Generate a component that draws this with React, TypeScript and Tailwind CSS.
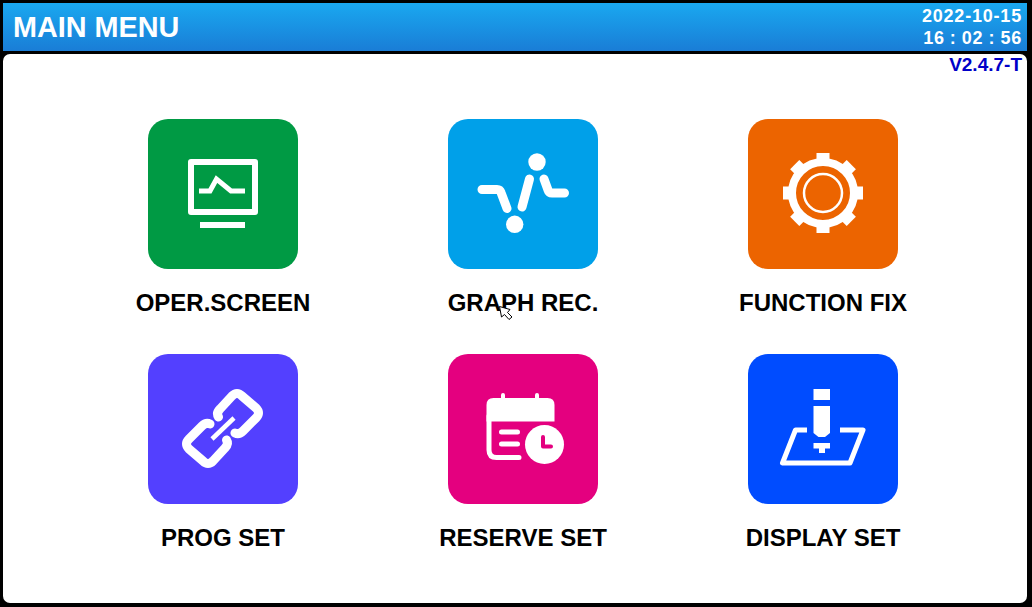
const Tile = ({ bg, label, children }: { bg: string; label: string; children: React.ReactNode }) => (
  <div className="flex flex-col items-center w-[300px]">
    <div className={`w-[150px] h-[150px] rounded-[20px] ${bg}`}>
      <svg width="150" height="150" viewBox="0 0 150 150" fill="none" className="block">{children}</svg>
    </div>
    <div className="mt-[20px] h-[27px] leading-[27px] text-[24px] font-bold text-black whitespace-nowrap">{label}</div>
  </div>
);

const gearTeeth = [0, 45, 90, 135, 180, 225, 270, 315];

const LINK = "M70.500 63Q68 59 72 55L84 42Q89 37 94 42L108 54Q113 59 108 64L95 77Q91 81 87 79";

export default function App() {
  return (
    <div className="relative w-[1032px] h-[607px] bg-black overflow-hidden pl-[3px] pr-[5px] pt-[3px] pb-[4px] flex flex-col font-['Liberation_Sans',Arial,sans-serif]">
      <header className="h-[48px] shrink-0 flex justify-between items-center pl-[10px] pr-[5px] bg-gradient-to-b from-[#1aa8f0] to-[#1a7dd6] text-white font-bold">
        <div className="text-[28.8px] leading-none">MAIN MENU</div>
        <div className="text-[18px] leading-[22px] text-right tracking-[0.8px]">
          <div>2022-10-15</div>
          <div className="[word-spacing:-0.7px]">16 : 02 : 56</div>
        </div>
      </header>
      <main className="mt-[3px] flex-1 bg-white rounded-[7px] flex flex-col">
        <div className="h-[22px] pr-[5px] text-right text-[#0000c8] font-bold text-[19px] leading-[22px]">V2.4.7-T</div>
        <div className="pt-[43px] pl-[70px] grid grid-cols-3 w-[970px] gap-y-[38px]">
          <Tile bg="bg-[#009a44]" label="OPER.SCREEN">
            <rect x="43" y="43" width="64" height="50" stroke="#fff" strokeWidth="6" strokeLinejoin="round" />
            <path d="M51 72h11l6.500-12L83 72h14" stroke="#fff" strokeWidth="5" />
            <rect x="52" y="103" width="45" height="6" fill="#fff" />
          </Tile>
          <Tile bg="bg-[#00a0e9]" label="GRAPH REC.">
            <circle cx="89" cy="43" r="8.700" fill="#fff" />
            <circle cx="66.700" cy="105.300" r="8.700" fill="#fff" />
            <g stroke="#fff" strokeWidth="9" strokeLinecap="round" strokeLinejoin="round">
              <path d="M34 70.500h15q3 0 4 3l6 16" />
              <path d="M81.500 60 74 88" />
              <path d="M96 60l4 11q1 3 4 3h12.500" />
            </g>
          </Tile>
          <Tile bg="bg-[#ec6400]" label="FUNCTION FIX">
            {gearTeeth.map((a) => (
              <rect key={a} x="68.500" y="34" width="13" height="12" fill="#fff" transform={`rotate(${a} 75 74)`} />
            ))}
            <circle cx="75" cy="74" r="31" stroke="#fff" strokeWidth="8" />
            <circle cx="75" cy="74" r="19" stroke="#fff" strokeWidth="2.500" />
          </Tile>
          <Tile bg="bg-[#5340ff]" label="PROG SET">
            <g stroke="#fff" strokeWidth="9" strokeLinecap="round" strokeLinejoin="round">
              <path d={LINK} />
              <path d={LINK} transform="rotate(180 74.500 74.500)" />
            </g>
            <path d="M64 85 86 64" stroke="#fff" strokeWidth="4.500" />
          </Tile>
          <Tile bg="bg-[#e4007f]" label="RESERVE SET">
            <path d="M38.500 67.500V51q0-7 7-7h54q7 0 7 7v16.500z" fill="#fff" />
            <path d="M55 41v6M89 41v6" stroke="#fff" strokeWidth="4" strokeLinecap="round" />
            <path d="M41 62v34q0 7.500 7.500 7.500H71" stroke="#fff" strokeWidth="5" strokeLinecap="round" />
            <path d="M53.500 78h16M53.500 90h16" stroke="#fff" strokeWidth="5" strokeLinecap="round" />
            <circle cx="96.500" cy="90.500" r="19.500" fill="#fff" />
            <path d="M95 83v9.500h8" stroke="#e4007f" strokeWidth="4" strokeLinecap="round" strokeLinejoin="round" />
          </Tile>
          <Tile bg="bg-[#004cff]" label="DISPLAY SET">
            <rect x="65.500" y="35" width="16.500" height="11" fill="#fff" />
            <path d="M65.500 52H82v27l-5 4h-6.500l-5-4z" fill="#fff" />
            <rect x="65.500" y="89" width="16.500" height="5.500" fill="#fff" />
            <rect x="71" y="94" width="6" height="5" fill="#fff" />
            <path d="M59 76H47.500L34.500 109H102L115 76H92" stroke="#fff" strokeWidth="5" strokeLinejoin="round" strokeLinecap="butt" />
          </Tile>
        </div>
      </main>
      <svg width="16" height="16" viewBox="0 0 16 16" className="absolute left-[498px] top-[305px]">
        <path d="M1.500 1.500 3.500 12 6.500 9.500 11 14.500 14 12 9.500 7.500 12 4.500z" fill="#fff" stroke="#000" strokeWidth="1" strokeLinejoin="round" />
      </svg>
    </div>
  );
}
